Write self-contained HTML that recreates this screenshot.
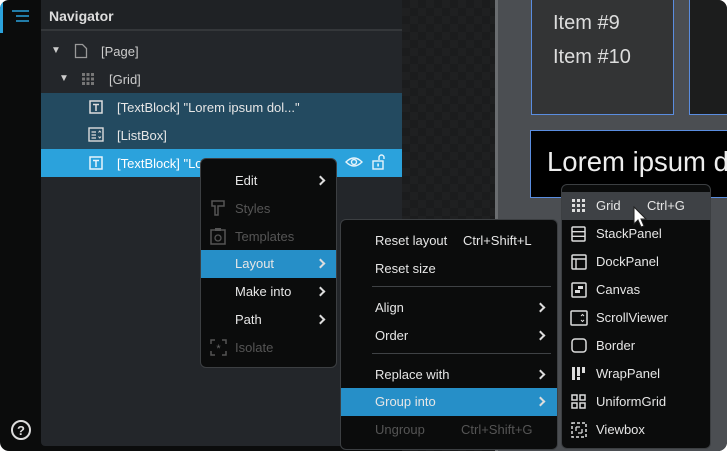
<!DOCTYPE html><html><head><style>
*{margin:0;padding:0;box-sizing:border-box}
body{width:727px;height:451px;background:#fff;font-family:"Liberation Sans",sans-serif;font-size:13px;color:#e6e6e6;position:relative;overflow:hidden}
.a{position:absolute}
.frame{left:0;top:0;width:727px;height:451px;background:#0b0c0c;border-radius:9px;overflow:hidden}
.chk{background-color:#1b1c1d;background-image:linear-gradient(45deg,#1f2021 25%,transparent 25%,transparent 75%,#1f2021 75%),linear-gradient(45deg,#1f2021 25%,transparent 25%,transparent 75%,#1f2021 75%);background-size:16px 16px;background-position:0 0,8px 8px}
.t{position:absolute;white-space:nowrap}
.menu{position:absolute;background:#0b0c0c;border:1px solid #3c3f42;border-radius:6px}
.it{position:absolute;left:0;right:0;height:28px}
.it span{position:absolute;top:6px;white-space:nowrap}
.hl{background:#268fc8}
.dis{color:#555}
.chev{position:absolute;width:7px;height:7px;border-right:2px solid #ddd;border-top:2px solid #ddd;transform:rotate(45deg)}
.sep{position:absolute;height:1px;background:#3f4245}
svg{position:absolute}
</style></head><body>
<div class="a frame">
 <div class="a" style="left:0;top:0;width:3px;height:33px;background:#2ba2dc"></div>
 <svg style="left:11px;top:9px" width="20" height="15"><g stroke="#2ba2dc" stroke-width="1.6"><line x1="1" y1="2" x2="18" y2="2"/><line x1="5" y1="7" x2="18" y2="7"/><line x1="5" y1="12" x2="18" y2="12"/></g></svg>
 <svg style="left:10px;top:419px" width="22" height="22"><circle cx="11" cy="11" r="9" fill="none" stroke="#ddd" stroke-width="2"/><text x="11" y="16" fill="#ddd" font-size="13" font-weight="bold" text-anchor="middle" font-family="Liberation Sans">?</text></svg>
 <div class="a" style="left:41px;top:0;width:361px;height:446px;background:#23262a;border-radius:0 0 0 4px"></div>
 <div class="a" style="left:41px;top:0;width:361px;height:31px;background:#1f2225;border-bottom:2px solid #34373a"></div>
 <div class="t" style="left:49px;top:8px;font-size:14px;font-weight:bold;color:#ddd">Navigator</div>
 <div class="t" style="left:51px;top:45px;font-size:10px;color:#ccc">▼</div>
 <svg style="left:74px;top:43px" width="14" height="16"><path d="M1.5 1.5H8.5L12.5 5.5V14.5H1.5Z" fill="none" stroke="#999" stroke-width="1.3"/></svg>
 <div class="t" style="left:101px;top:44px;color:#ccc">[Page]</div>
 <div class="t" style="left:59px;top:73px;font-size:10px;color:#ccc">▼</div>
 <svg style="left:82px;top:73px" width="12" height="12" fill="#777"><rect x="0" y="0" width="3" height="3"/><rect x="4.5" y="0" width="3" height="3"/><rect x="9" y="0" width="3" height="3"/><rect x="0" y="4.5" width="3" height="3"/><rect x="4.5" y="4.5" width="3" height="3"/><rect x="9" y="4.5" width="3" height="3"/><rect x="0" y="9" width="3" height="3"/><rect x="4.5" y="9" width="3" height="3"/><rect x="9" y="9" width="3" height="3"/></svg>
 <div class="t" style="left:109px;top:72px;color:#ccc">[Grid]</div>
 <div class="a" style="left:41px;top:93px;width:361px;height:56px;background:#234a60"></div>
 <div class="a" style="left:41px;top:149px;width:361px;height:28px;background:#2ba2dc"></div>
 <svg style="left:89px;top:100px" width="14" height="14"><rect x="1" y="1" width="12" height="12" fill="none" stroke="#ddd" stroke-width="1.5"/><path d="M4 4.5H10M7 4.5V11" stroke="#ddd" stroke-width="1.5"/></svg>
 <div class="t" style="left:117px;top:100px;color:#e6e6e6">[TextBlock] "Lorem ipsum dol..."</div>
 <svg style="left:88px;top:127px" width="16" height="15"><rect x="1" y="1" width="14" height="13" fill="none" stroke="#ddd" stroke-width="1.4"/><path d="M3.5 5H8M3.5 8H8M3.5 11H8" stroke="#ddd" stroke-width="1.2"/><path d="M10.5 5.5L11.8 4 13 5.5M10.5 9.5L11.8 11 13 9.5" stroke="#ddd" fill="none"/></svg>
 <div class="t" style="left:117px;top:128px">[ListBox]</div>
 <svg style="left:89px;top:156px" width="14" height="14"><rect x="1" y="1" width="12" height="12" fill="none" stroke="#e6f4fb" stroke-width="1.5"/><path d="M4 4.5H10M7 4.5V11" stroke="#e6f4fb" stroke-width="1.5"/></svg>
 <div class="t" style="left:117px;top:156px;color:#fff">[TextBlock] "Lo</div>
 <svg style="left:345px;top:156px" width="18" height="12"><path d="M1 6Q9 -2 17 6Q9 14 1 6Z" fill="none" stroke="#e6f4fb" stroke-width="1.4"/><circle cx="9" cy="6" r="2.5" fill="none" stroke="#e6f4fb" stroke-width="1.4"/></svg>
 <svg style="left:372px;top:154px" width="14" height="16"><path d="M7 6V3.5A2.5 2.5 0 0 1 12 3.5V5" fill="none" stroke="#e6f4fb" stroke-width="1.4"/><rect x="1" y="7" width="10" height="8" fill="none" stroke="#e6f4fb" stroke-width="1.4"/><rect x="5.3" y="9.5" width="1.6" height="3" fill="#e6f4fb"/></svg>
 <div class="a chk" style="left:402px;top:0;width:93px;height:451px"></div>
 <div class="a" style="left:495px;top:0;width:232px;height:451px;background:#4b4e52"></div>
 <div class="a" style="left:495px;top:0;width:3px;height:451px;background:#6a6d70"></div>
 <div class="a" style="left:531px;top:0;width:143px;height:115px;background:#333435;border:1px solid #5a8de0;border-top:none"></div>
 <div class="t" style="left:553px;top:12px;font-size:20px;color:#ddd">Item #9</div>
 <div class="t" style="left:553px;top:46px;font-size:20px;color:#ddd">Item #10</div>
 <div class="a" style="left:689px;top:0;width:40px;height:115px;background:#1c1d1d;border:1px solid #5a8de0;border-top:none"></div>
 <div class="a" style="left:530px;top:130px;width:200px;height:68px;background:#000;border:1px solid #5a8de0"></div>
 <div class="t" style="left:547px;top:146px;font-size:27.5px;color:#eee">Lorem ipsum d</div>
 <div class="menu" style="left:200px;top:158px;width:137px;height:210px">
  <div class="it" style="top:8px"><span style="left:34px">Edit</span><i class="chev" style="left:116px;top:10px"></i></div>
  <div class="it dis" style="top:36px"><span style="left:34px">Styles</span></div>
  <svg style="left:9px;top:40px" width="16" height="18"><path d="M2 2H14V7H8V16H5V7H2Z" fill="none" stroke="#555" stroke-width="1.5"/></svg>
  <div class="it dis" style="top:64px"><span style="left:34px">Templates</span></div>
  <svg style="left:9px;top:68px" width="16" height="18"><rect x="1" y="3" width="14" height="14" fill="none" stroke="#555" stroke-width="1.5"/><rect x="5" y="1" width="6" height="3" fill="#555"/><circle cx="8" cy="11" r="3" fill="none" stroke="#555" stroke-width="1.3"/></svg>
  <div class="it hl" style="top:91px"><span style="left:34px">Layout</span><i class="chev" style="left:116px;top:10px"></i></div>
  <div class="it" style="top:119px"><span style="left:34px">Make into</span><i class="chev" style="left:116px;top:10px"></i></div>
  <div class="it" style="top:147px"><span style="left:34px">Path</span><i class="chev" style="left:116px;top:10px"></i></div>
  <div class="it dis" style="top:175px"><span style="left:34px">Isolate</span></div>
  <svg style="left:9px;top:180px" width="17" height="17"><path d="M1 5V1H5M12 1H16V5M16 12V16H12M5 16H1V12" fill="none" stroke="#555" stroke-width="1.5"/><text x="8.5" y="13" fill="#666" font-size="11" text-anchor="middle">*</text></svg>
 </div>
 <div class="menu" style="left:340px;top:219px;width:218px;height:231px">
  <div class="it" style="top:7px"><span style="left:34px">Reset layout</span><span style="left:122px">Ctrl+Shift+L</span></div>
  <div class="it" style="top:35px"><span style="left:34px">Reset size</span></div>
  <div class="sep" style="left:31px;right:6px;top:66px"></div>
  <div class="it" style="top:74px"><span style="left:34px">Align</span><i class="chev" style="left:196px;top:10px"></i></div>
  <div class="it" style="top:102px"><span style="left:34px">Order</span><i class="chev" style="left:196px;top:10px"></i></div>
  <div class="sep" style="left:31px;right:6px;top:133px"></div>
  <div class="it" style="top:141px"><span style="left:34px">Replace with</span><i class="chev" style="left:196px;top:10px"></i></div>
  <div class="it hl" style="top:168px"><span style="left:34px">Group into</span><i class="chev" style="left:196px;top:10px"></i></div>
  <div class="it dis" style="top:196px"><span style="left:34px">Ungroup</span><span style="left:120px">Ctrl+Shift+G</span></div>
 </div>
 <div class="menu" style="left:561px;top:184px;width:150px;height:265px">
  <div class="it" style="top:7px;background:#3e4145"><span style="left:34px">Grid</span><span style="left:85px">Ctrl+G</span></div>
  <svg style="left:10px;top:14px" width="13" height="13" fill="#ddd"><rect x="0" y="0" width="3" height="3"/><rect x="5" y="0" width="3" height="3"/><rect x="10" y="0" width="3" height="3"/><rect x="0" y="5" width="3" height="3"/><rect x="5" y="5" width="3" height="3"/><rect x="10" y="5" width="3" height="3"/><rect x="0" y="10" width="3" height="3"/><rect x="5" y="10" width="3" height="3"/><rect x="10" y="10" width="3" height="3"/></svg>
  <div class="it" style="top:35px"><span style="left:34px">StackPanel</span></div>
  <svg style="left:9px;top:41px" width="15" height="16"><rect x="1" y="1" width="13" height="14" rx="1" fill="none" stroke="#ddd" stroke-width="1.5"/><path d="M1 5.7H14M1 10.3H14" stroke="#ddd" stroke-width="1.4"/></svg>
  <div class="it" style="top:63px"><span style="left:34px">DockPanel</span></div>
  <svg style="left:9px;top:69px" width="16" height="16"><rect x="1" y="1" width="14" height="14" rx="1" fill="none" stroke="#ddd" stroke-width="1.5"/><path d="M1 5H15M5 5V15" stroke="#ddd" stroke-width="1.4"/></svg>
  <div class="it" style="top:91px"><span style="left:34px">Canvas</span></div>
  <svg style="left:9px;top:97px" width="16" height="16"><rect x="1" y="1" width="14" height="14" rx="1" fill="none" stroke="#ddd" stroke-width="1.5"/><rect x="7" y="4" width="5" height="3" fill="#ddd"/><rect x="4" y="8" width="5" height="3" fill="#ddd"/></svg>
  <div class="it" style="top:119px"><span style="left:34px">ScrollViewer</span></div>
  <svg style="left:8px;top:125px" width="18" height="16"><rect x="1" y="1" width="16" height="14" rx="1" fill="none" stroke="#ddd" stroke-width="1.5"/><path d="M11 6L12.5 4.5 14 6M11 10L12.5 11.5 14 10" fill="none" stroke="#ddd"/></svg>
  <div class="it" style="top:147px"><span style="left:34px">Border</span></div>
  <svg style="left:9px;top:153px" width="16" height="15"><rect x="1" y="1" width="14" height="13" rx="3" fill="none" stroke="#ddd" stroke-width="1.5"/></svg>
  <div class="it" style="top:175px"><span style="left:34px">WrapPanel</span></div>
  <svg style="left:10px;top:181px" width="15" height="15" fill="#ddd"><rect x="0" y="1" width="3" height="13"/><rect x="5" y="1" width="3" height="9"/><rect x="5" y="11" width="3" height="3"/><rect x="10" y="1" width="3" height="6"/></svg>
  <div class="it" style="top:203px"><span style="left:34px">UniformGrid</span></div>
  <svg style="left:9px;top:209px" width="16" height="16"><g fill="none" stroke="#ddd" stroke-width="1.5"><rect x="1" y="1" width="5" height="5"/><rect x="9" y="1" width="5" height="5"/><rect x="1" y="9" width="5" height="5"/><rect x="9" y="9" width="5" height="5"/></g></svg>
  <div class="it" style="top:231px"><span style="left:34px">Viewbox</span></div>
  <svg style="left:9px;top:237px" width="16" height="16"><rect x="1" y="1" width="14" height="14" fill="none" stroke="#ddd" stroke-width="1.5" stroke-dasharray="3 2"/><path d="M5 5V9M5 5H9M11 11H7M11 11V7" stroke="#ddd" stroke-width="1.3"/></svg>
 </div>
 <svg style="left:633px;top:206px" width="16" height="24"><path d="M1 1V18L5 14L8 21L11 20L8 13H13Z" fill="#fff" stroke="#222" stroke-width="1"/></svg>
</div>
</body></html>
